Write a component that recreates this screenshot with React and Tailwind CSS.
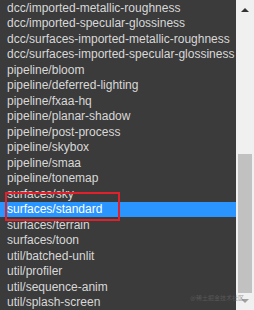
import React from "react";

const items = [
  "dcc/imported-metallic-roughness",
  "dcc/imported-specular-glossiness",
  "dcc/surfaces-imported-metallic-roughness",
  "dcc/surfaces-imported-specular-glossiness",
  "pipeline/bloom",
  "pipeline/deferred-lighting",
  "pipeline/fxaa-hq",
  "pipeline/planar-shadow",
  "pipeline/post-process",
  "pipeline/skybox",
  "pipeline/smaa",
  "pipeline/tonemap",
  "surfaces/sky",
  "surfaces/standard",
  "surfaces/terrain",
  "surfaces/toon",
  "util/batched-unlit",
  "util/profiler",
  "util/sequence-anim",
  "util/splash-screen",
];

export default function App() {
  return (
    <div className="relative flex w-[254px] h-[310px] overflow-hidden bg-[#3b3b3b]" style={{ fontFamily: '"Liberation Sans", Arial, sans-serif' }}>
      <div className="flex flex-col w-[236px]">
        {items.map((t) => {
          const sel = t === "surfaces/standard";
          return (
            <div
              key={t}
              className={
                "h-[15.5px] shrink-0 flex items-center pl-[7px] text-[12px] leading-none whitespace-nowrap " +
                (sel ? "bg-[#2b95ff] text-white" : "text-[#d8d8d8]")
              }
            >
              {t}
            </div>
          );
        })}
      </div>
      <div className="flex flex-col w-[18px] bg-[#f0f0f0]">
        <div className="h-[18px] flex items-center justify-center">
          <svg width="8" height="5" viewBox="0 0 8 5">
            <path d="M0 5 L4 1 L8 5 Z" fill="#333333" />
          </svg>
        </div>
        <div className="h-[136px]" />
        <div className="h-[139px] mx-[2px] bg-[#c1c1c1]" />
        <div className="flex-1 flex items-center justify-center">
          <svg width="8" height="5" viewBox="0 0 8 5">
            <path d="M0 0 L8 0 L4 4 Z" fill="#a0a0a0" />
          </svg>
        </div>
      </div>
      <div className="absolute left-[5px] top-[192px] w-[115px] h-[29px] border-2 border-[#e0202a]" />
      <div
        className="absolute right-[10px] top-[295px] text-[6px] leading-none text-[#6a6a6a] opacity-60"
        style={{ fontFamily: '"Noto Sans CJK SC", sans-serif' }}
      >
        @稀土掘金技术社区
      </div>
    </div>
  );
}
